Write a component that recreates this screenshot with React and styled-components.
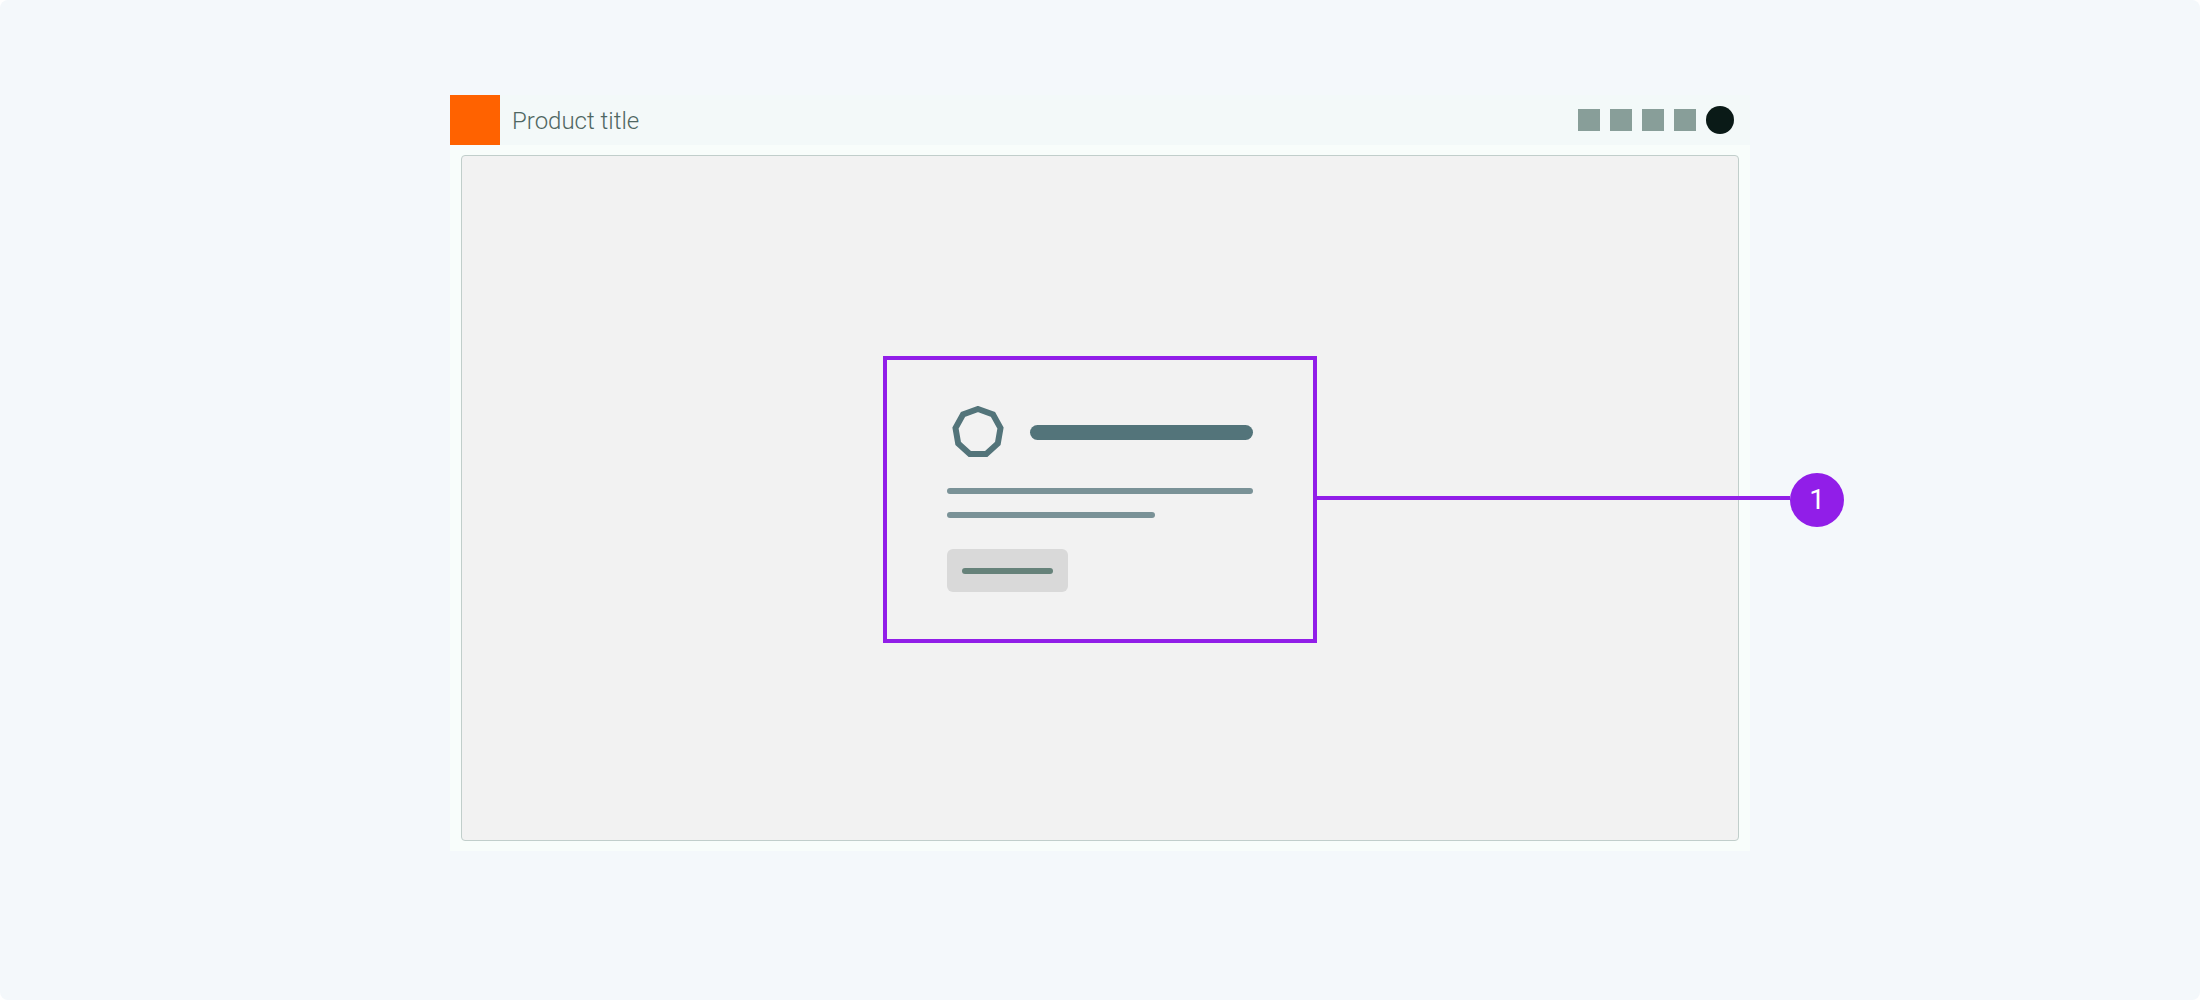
import React from "react";
import styled, { createGlobalStyle } from "styled-components";

const GlobalStyle = createGlobalStyle`
  *, *::before, *::after { box-sizing: border-box; }
  body {
    margin: 0;
    background: #ffffff;
    font-family: Roboto, "Liberation Sans", sans-serif;
  }
`;

const Stage = styled.main`
  display: flex;
  justify-content: center;
  align-items: flex-start;
  min-height: 100vh;
  padding: 95px 32px;
  border-radius: 8px;
  background: #f4f8fb;
`;

const Frame = styled.section`
  width: 100%;
  max-width: 1300px;
  background: #f8fdfb;
`;

const TopBar = styled.header`
  display: flex;
  align-items: center;
  height: 50px;
  padding-right: 16px;
  background: #f3f9f9;
`;

const Logo = styled.div`
  width: 50px;
  height: 50px;
  background: #ff6200;
`;

const Title = styled.h1`
  flex: 1;
  margin: 0;
  padding: 2px 0 0 12px;
  color: #4f6762;
  font-size: 24px;
  line-height: 32px;
  font-weight: 350;
`;

const Actions = styled.div`
  display: flex;
  align-items: center;
  gap: 10px;
`;

const Action = styled.div`
  width: 22px;
  height: 22px;
  background: #889e99;
`;

const Avatar = styled.div`
  width: 28px;
  height: 28px;
  border-radius: 50%;
  background: #0a1a17;
`;

const Body = styled.div`
  padding: 10px 11px;
`;

const Canvas = styled.div`
  display: flex;
  justify-content: center;
  padding: 200px 32px 197px;
  border: 1px solid #c1cecb;
  border-radius: 4px;
  background: #f2f2f2;
`;

const EmptyState = styled.article`
  position: relative;
  width: 434px;
  padding: 46px 60px 47px;
  border: 4px solid #911ee8;
`;

const Heading = styled.div`
  display: flex;
  align-items: center;
  gap: 26px;
  padding-left: 5px;
`;

const Emblem = styled.svg`
  flex: none;
  display: block;
  width: 52px;
  height: 52px;
`;

const Bar = styled.div`
  flex: ${({ $grow }) => ($grow ? 1 : "none")};
  width: ${({ $width }) => $width || "auto"};
  height: ${({ $thick }) => ($thick ? 15 : 6)}px;
  border-radius: 8px;
  background: ${({ $color }) => $color};
`;

const Lines = styled.div`
  display: flex;
  flex-direction: column;
  gap: 18px;
  margin: 30px 0 31px;
`;

const ActionButton = styled.button`
  display: flex;
  align-items: center;
  width: 121px;
  height: 43px;
  padding: 0 15px;
  border: 0;
  border-radius: 6px;
  background: #d9d9d9;
`;

const Callout = styled.div`
  position: absolute;
  top: 113px;
  left: 100%;
  display: flex;
  align-items: center;
`;

const Connector = styled.div`
  width: 477px;
  height: 4px;
  margin-bottom: 4px;
  background: #911ee8;
`;

const Marker = styled.div`
  display: flex;
  align-items: center;
  justify-content: center;
  width: 54px;
  height: 54px;
  border-radius: 50%;
  background: #911ee8;
  color: #ffffff;
  font-size: 28px;
  line-height: 32px;
`;

export default function App() {
  return (
    <>
      <GlobalStyle />
      <Stage>
        <Frame>
          <TopBar>
            <Logo />
            <Title>Product title</Title>
            <Actions>
              <Action />
              <Action />
              <Action />
              <Action />
              <Avatar />
            </Actions>
          </TopBar>
          <Body>
            <Canvas>
              <EmptyState>
                <Heading>
                  <Emblem viewBox="0 0 52 52" aria-hidden="true">
                    <path
                      d="M26 3 L41 8.5 L48.5 22 L45.8 37.5 L34.2 48 L17.8 48 L6.2 37.5 L3.5 22 L11 8.5 Z"
                      fill="none"
                      stroke="#53747a"
                      strokeWidth="6"
                    />
                  </Emblem>
                  <Bar $grow $thick $color="#53747a" />
                </Heading>
                <Lines>
                  <Bar $width="100%" $color="#7a9297" />
                  <Bar $width="68%" $color="#7a9297" />
                </Lines>
                <ActionButton type="button" aria-label="Action">
                  <Bar $width="100%" $color="#66827a" />
                </ActionButton>
                <Callout>
                  <Connector />
                  <Marker>1</Marker>
                </Callout>
              </EmptyState>
            </Canvas>
          </Body>
        </Frame>
      </Stage>
    </>
  );
}
